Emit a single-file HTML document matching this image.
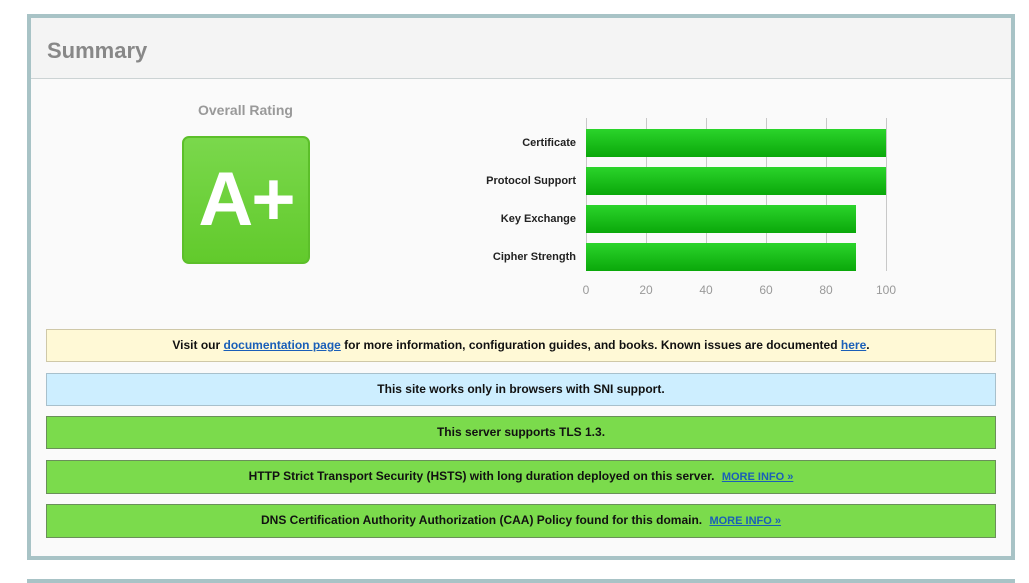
<!DOCTYPE html>
<html><head><style>
body{margin:0;background:#fff;width:1029px;height:583px;position:relative;font-family:"Liberation Sans",Arial,sans-serif;overflow:hidden}
.box{position:absolute;left:27px;top:14px;width:980px;height:538px;border:4px solid #a8c3c6;background:#fafafa}
.hdr{position:absolute;left:0;top:0;width:980px;height:60px;background:#f4f4f4;border-bottom:1px solid #ccd3d4}
.hdr span{position:absolute;left:16px;top:20px;font-size:22px;font-weight:bold;color:#888}
.ov{position:absolute;left:198px;top:102px;font-size:14px;font-weight:bold;color:#999}
.grade{position:absolute;left:182px;top:136px;width:124px;height:124px;border:2px solid #5cbf2a;border-radius:7px;background:linear-gradient(#7ad84c,#62ca2c);color:#fff;font-weight:bold;font-size:76px;text-align:center;line-height:124px;letter-spacing:-2px}
.lbl{position:absolute;right:453px;font-size:11px;font-weight:bold;color:#222}
.bar{position:absolute;left:586px;height:28px;background:linear-gradient(#2bd42b,#0aa80a)}
.g{position:absolute;top:118px;width:1px;height:153px;background:#c8c8c8}
.t{position:absolute;top:283px;font-size:12px;color:#999;width:40px;text-align:center}
.n{position:absolute;left:46px;width:948px;border:1px solid;text-align:center;font-size:12px;font-weight:bold;color:#111;line-height:31px}
.n a{color:#1a5fb8;text-decoration:underline}
.m{font-size:11px;margin-left:4px}
.bot{position:absolute;left:27px;top:579px;width:988px;height:4px;background:#a8c3c6}
</style></head><body>
<div class="box"><div class="hdr"><span>Summary</span></div></div>
<div class="ov">Overall Rating</div>
<div class="grade">A+</div>
<div class="g" style="left:586px"></div><div class="g" style="left:646px"></div><div class="g" style="left:706px"></div><div class="g" style="left:766px"></div><div class="g" style="left:826px"></div><div class="g" style="left:886px"></div>
<div class="bar" style="top:129px;width:300px"></div>
<div class="bar" style="top:167px;width:300px"></div>
<div class="bar" style="top:205px;width:270px"></div>
<div class="bar" style="top:243px;width:270px"></div>
<div class="lbl" style="top:137px">Certificate</div>
<div class="lbl" style="top:175px">Protocol Support</div>
<div class="lbl" style="top:213px">Key Exchange</div>
<div class="lbl" style="top:251px">Cipher Strength</div>
<div class="t" style="left:566px">0</div><div class="t" style="left:626px">20</div><div class="t" style="left:686px">40</div><div class="t" style="left:746px">60</div><div class="t" style="left:806px">80</div><div class="t" style="left:866px">100</div>
<div class="n" style="top:329px;background:#fff9d6;border-color:#cfc8a8">Visit our <a>documentation page</a> for more information, configuration guides, and books. Known issues are documented <a>here</a>.</div>
<div class="n" style="top:373px;background:#cdeeff;border-color:#a8c0cc">This site works only in browsers with SNI support.</div>
<div class="n" style="top:416px;background:#7bdb4c;border-color:#6a8f5a">This server supports TLS 1.3.</div>
<div class="n" style="top:460px;background:#7bdb4c;border-color:#6a8f5a">HTTP Strict Transport Security (HSTS) with long duration deployed on this server. <a class="m">MORE INFO »</a></div>
<div class="n" style="top:504px;background:#7bdb4c;border-color:#6a8f5a">DNS Certification Authority Authorization (CAA) Policy found for this domain. <a class="m">MORE INFO »</a></div>
<div class="bot"></div>
</body></html>
